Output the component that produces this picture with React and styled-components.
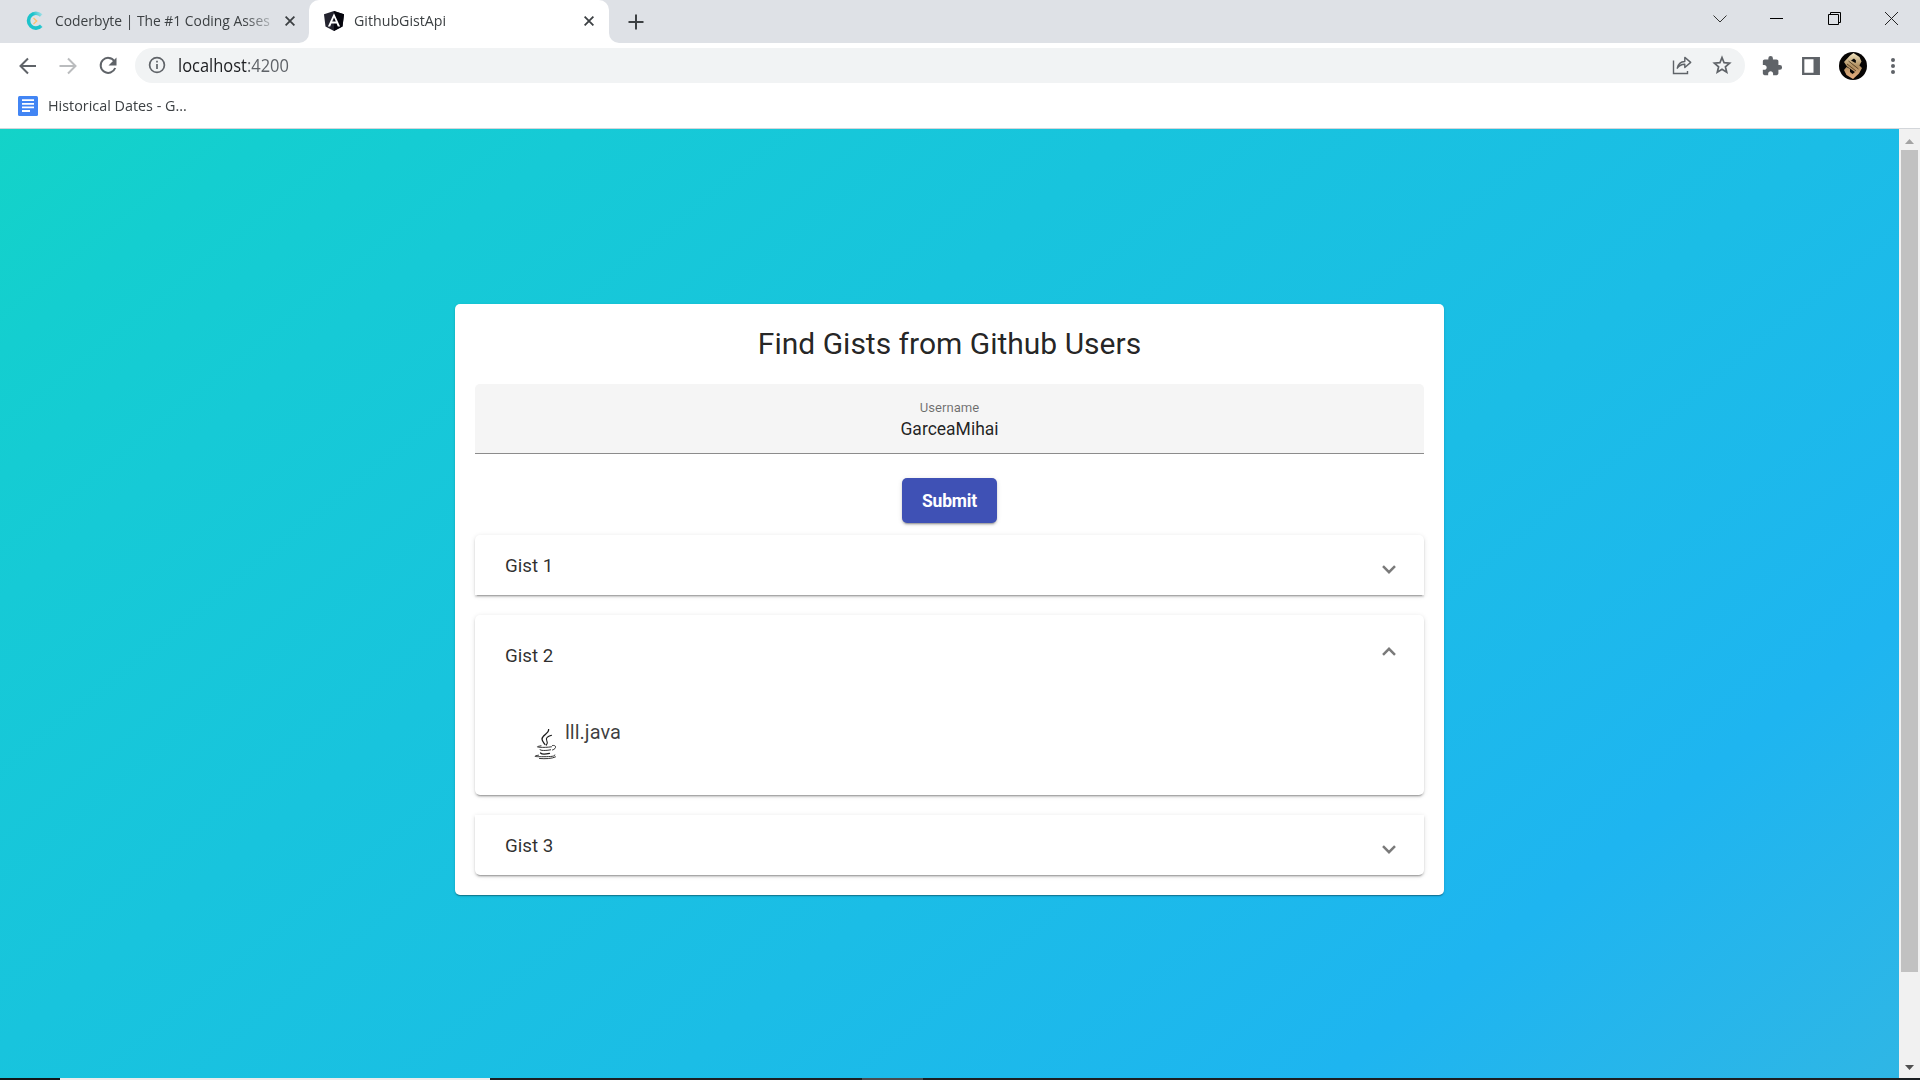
import React from "react";
import styled, { createGlobalStyle } from "styled-components";

const Global = createGlobalStyle`
  * { box-sizing: border-box; }
  html, body { margin: 0; height: 100%; overflow: hidden; }
  body { font-family: Roboto, "Liberation Sans", sans-serif; color: rgba(0,0,0,0.87); }
`;

const Window = styled.div`
  width: 1920px;
  height: 1080px;
  display: flex;
  flex-direction: column;
  background: #fff;
  overflow: hidden;
`;

const chromeFont = `"Open Sans", "Noto Sans", sans-serif`;

const TabStrip = styled.div`
  height: 43px;
  flex: none;
  display: flex;
  background: #fff;
`;
const TabSlot = styled.div`
  display: flex;
  background: ${(p) => (p.$active ? "#dee1e6" : "#fff")};
`;
const Tab = styled.div`
  display: flex;
  align-items: center;
  height: 43px;
  width: ${(p) => p.$width}px;
  padding: ${(p) => p.$padding};
  background: ${(p) => (p.$active ? "#fff" : "#dee1e6")};
  border-radius: ${(p) => (p.$active ? "10px 10px 0 0" : "0 0 10px 0")};
`;
const TabTitle = styled.span`
  font: 14.5px ${chromeFont};
  color: #3c4043;
  white-space: nowrap;
  margin-left: 10px;
  flex: 1;
  height: 22px;
  line-height: 21px;
  mask-image: ${(p) => (p.$faded ? "linear-gradient(to right, #000 82%, transparent 98%)" : "none")};
`;
const Condensed = styled.span`
  display: inline-block;
  transform-origin: 0 50%;
  transform: scaleX(${(p) => p.$scale});
`;
const StripEnd = styled.div`
  flex: 1;
  display: flex;
  justify-content: space-between;
  padding-left: 19px;
  background: #dee1e6;
  border-bottom-left-radius: 10px;
`;
const WindowButtons = styled.div`
  display: flex;
  height: 37px;
  align-items: center;
`;
const WinButton = styled.div`
  width: 57px;
  display: flex;
  justify-content: center;
`;

const Toolbar = styled.div`
  height: 45px;
  flex: none;
  display: flex;
  align-items: center;
  padding: 0 24px 0 16px;
`;
const Nav = styled.div`
  display: flex;
  gap: 16px;
  margin-right: 15px;
  svg { display: block; }
`;
const Address = styled.div`
  flex: 1;
  height: 35px;
  border-radius: 18px;
  background: #f1f3f4;
  display: flex;
  align-items: center;
  padding: 0 13px 0 13px;
  margin-top: -1px;
`;
const Url = styled.div`
  flex: 1;
  margin-left: 12px;
  font: 17.5px/24px ${chromeFont};
  color: #5f6368;
  b { font-weight: 400; color: #202124; }
`;
const Actions = styled.div`
  display: flex;
  align-items: center;
  gap: ${(p) => p.$gap}px;
  svg { display: block; }
`;
const ToolIcons = styled.div`
  display: flex;
  align-items: center;
  gap: 19px;
  margin-left: 16px;
  svg { display: block; }
  svg:last-child { margin-left: 4px; }
`;
const Bookmarks = styled.div`
  height: 41px;
  flex: none;
  display: flex;
  align-items: center;
  padding: 0 0 5px 18px;
  border-bottom: 1px solid #d3d6da;
`;
const BookmarkTitle = styled.span`
  margin-left: 10px;
  font: 14.5px/20px ${chromeFont};
  color: #3c4043;
  white-space: nowrap;
`;

const Viewport = styled.div`
  flex: 1;
  display: flex;
  min-height: 0;
`;
const Page = styled.main`
  flex: 1;
  display: flex;
  justify-content: center;
  align-items: flex-start;
  padding-top: 175px;
  background: linear-gradient(
    141deg,
    #13d3c8 0%,
    #14ced0 9%,
    #16cad6 19%,
    #18c4dd 37%,
    #1bbde6 60%,
    #1eb5f0 81.4%,
    #2fb6e5 100%
  );
`;
const Scrollbar = styled.div`
  width: 21px;
  display: flex;
  flex-direction: column;
  align-items: center;
  background: #f1f1f1;
`;
const Arrow = styled.div`
  height: 21px;
  display: flex;
  align-items: center;
  padding-top: ${(p) => p.$drop || 0}px;
`;
const Thumb = styled.div`
  width: 17px;
  height: 822px;
  background: #c1c1c1;
`;
const TrackEnd = styled.div`
  flex: 1;
`;
const Taskbar = styled.div`
  height: 2px;
  flex: none;
  display: flex;
  background: #1b1f22;
`;
const TaskSegment = styled.div`
  width: ${(p) => p.$width}px;
  background: ${(p) => p.$color};
`;

const elevation = `0 3px 1px -2px rgba(0,0,0,.2), 0 2px 2px 0 rgba(0,0,0,.14), 0 1px 5px 0 rgba(0,0,0,.12)`;

const Card = styled.section`
  width: 989px;
  height: 591px;
  padding: 20px;
  border-radius: 5px;
  background: #fff;
  box-shadow: 0 2px 1px -1px rgba(0,0,0,.2), 0 1px 1px 0 rgba(0,0,0,.14), 0 1px 3px 0 rgba(0,0,0,.12);
  display: flex;
  flex-direction: column;
  align-items: center;
`;
const Title = styled.h1`
  margin: 0 0 20px;
  font-size: 30px;
  line-height: 39px;
  height: 40px;
  font-weight: 400;
`;
const Field = styled.div`
  width: 100%;
  height: 70px;
  flex: none;
  display: flex;
  flex-direction: column;
  align-items: center;
  padding-top: 15px;
  background: #f5f5f5;
  border-radius: 5px 5px 0 0;
  border-bottom: 1px solid #8c8c8c;
`;
const Label = styled.label`
  font-size: 13.1px;
  line-height: 18px;
  color: rgba(0,0,0,.56);
`;
const Value = styled.span`
  font-size: 17.5px;
  line-height: 24px;
`;
const Submit = styled.button`
  margin: 24px 0 12px;
  width: 95px;
  height: 45px;
  flex: none;
  padding: 1px 0 0;
  border: 0;
  border-radius: 5px;
  background: #3f51b5;
  color: #fff;
  font: 700 17.5px/44px Roboto, sans-serif;
  letter-spacing: -0.2px;
  box-shadow: ${elevation};
`;
const Panels = styled.div`
  width: 100%;
  display: flex;
  flex-direction: column;
  gap: 20px;
`;
const Panel = styled.article`
  height: ${(p) => p.$height}px;
  border-radius: ${(p) => p.$radius};
  background: #fff;
  box-shadow: ${elevation};
`;
const PanelHeader = styled.header`
  height: ${(p) => (p.$open ? 80 : 60)}px;
  display: flex;
  justify-content: space-between;
  align-items: center;
  padding: 0 28px 0 30px;
`;
const PanelTitle = styled.span`
  padding-top: 1px;
  font-size: 18.75px;
  color: rgba(0,0,0,.82);
`;
const ChevronBox = styled.span`
  display: flex;
  padding-top: ${(p) => (p.$open ? 0 : 8)}px;
  padding-bottom: ${(p) => (p.$open ? 8 : 0)}px;
`;
const FileRow = styled.div`
  display: flex;
  padding: 22px 0 0 59px;
  svg { margin-top: 12px; }
`;
const FileName = styled.span`
  margin-left: 7px;
  font-size: 20px;
  line-height: 30px;
  color: rgba(0,0,0,.76);
`;

const Cross = () => (
  <svg width="10" height="10" viewBox="0 0 10 10" stroke="#3c4043" strokeWidth="1.8">
    <path d="M0.6 0.6l8.8 8.8M9.4 0.6L0.6 9.4" />
  </svg>
);
const Coderbyte = () => (
  <svg width="20" height="20" viewBox="0 0 20 20" fill="none">
    <defs>
      <linearGradient id="ring" x1="1" y1="0" x2="0.5" y2="0.3">
        <stop offset="0" stopColor="#9fdfe6" />
        <stop offset="1" stopColor="#1cc3cb" />
      </linearGradient>
    </defs>
    <path d="M16.200 4.500A7.400 7.400 0 1 0 16.300 14.800" stroke="url(#ring)" strokeWidth="3.6" />
    <path d="M8.500 7l3.200 3-3.200 3" stroke="#fbc36b" strokeWidth="1.3" />
  </svg>
);
const Angular = () => (
  <svg width="20" height="20" viewBox="0 0 20 20">
    <path d="M10 0L20 3.3l-1.5 12.3L10 20l-8.5-4.4L0 3.3z" fill="#23232e" />
    <path d="M10 0L20 3.3l-1.5 12.3L10 20z" fill="#05050d" />
    <path d="M10 2.3L3.9 15.4h2.3l1.2-3h5.2l1.2 3h2.3zM10 6.6l1.8 4H8.2z" fill="#fff" />
  </svg>
);
const NavArrow = ({ color, forward }) => (
  <svg width="24" height="24" viewBox="0 0 24 24" fill="none" stroke={color} strokeWidth="2">
    <path d={forward ? "M3.500 12h16M12 4.500l7.500 7.500-7.500 7.500" : "M20 12H4.500M12 4.500L4.500 12l7.500 7.500"} />
  </svg>
);
const Reload = () => (
  <svg width="24" height="24" viewBox="0 0 24 24">
    <path d="M18.4 7.2A7.5 7.5 0 1 0 19.2 14" fill="none" stroke="#5f6368" strokeWidth="2" />
    <path d="M20.5 3.5v8h-8z" fill="#5f6368" />
  </svg>
);
const Info = () => (
  <svg width="18" height="18" viewBox="0 0 18 18" fill="none" stroke="#5f6368" strokeWidth="1.7">
    <circle cx="9" cy="9" r="7.4" />
    <path d="M9 8v5M9 4.8v1.8" />
  </svg>
);
const Share = () => (
  <svg width="20" height="20" viewBox="0 0 20 20" fill="none" stroke="#5f6368" strokeWidth="1.4">
    <path d="M1.500 5.500v13h14v-2.500" />
    <path d="M5.300 13.200c.8-4.300 3.500-6.500 7.500-6.700V2.400l5.900 5-5.900 5.100V9.200c-3.500-.1-5.500 1.200-7.500 4z" strokeLinejoin="round" />
  </svg>
);
const Star = () => (
  <svg width="20" height="20" viewBox="0 0 20 20" fill="none" stroke="#5f6368" strokeWidth="1.7">
    <path d="M10 2.6l2.1 5.1 5.5.5-4.2 3.6 1.3 5.4L10 14.3l-4.7 2.9 1.3-5.4-4.2-3.6 5.5-.5z" />
  </svg>
);
const Puzzle = () => (
  <svg width="22" height="22" viewBox="0 0 24 24" fill="#5f6368">
    <path d="M20.5 11H19V7c0-1.1-.9-2-2-2h-4V3.5a2.500 2.500 0 0 0-5 0V5H4c-1.100 0-1.990.9-1.990 2v3.800H3.500c1.490 0 2.700 1.210 2.700 2.700s-1.210 2.700-2.700 2.700H2V20c0 1.100.9 2 2 2h3.800v-1.500c0-1.490 1.210-2.700 2.700-2.700s2.700 1.210 2.700 2.700V22H17c1.100 0 2-.9 2-2v-4h1.500a2.500 2.500 0 0 0 0-5z" />
  </svg>
);
const SidePanel = () => (
  <svg width="18" height="18" viewBox="0 0 18 18">
    <path d="M1.200 1.200h15.600v15.600H1.200z" fill="#fff" stroke="#5f6368" strokeWidth="2.300" />
    <path d="M11.500 1H17v16h-5.500z" fill="#5f6368" />
  </svg>
);
const Avatar = () => (
  <svg width="28" height="28" viewBox="0 0 28 28">
    <defs>
      <linearGradient id="gold" x1="0" y1="0" x2="0" y2="1">
        <stop offset="0" stopColor="#f0e4c0" />
        <stop offset=".5" stopColor="#b08f60" />
        <stop offset="1" stopColor="#e8ae80" />
      </linearGradient>
    </defs>
    <circle cx="14" cy="14" r="14" fill="#070504" />
    <path d="M14.500 1L11 3.500 5 10l3 4.500 8 5.500-2.500 2-2.500-2v-3L7.500 15 5 18l2.500 5L14 27l6-5.500 3-5.500-3-3-8-4.500 3-2 2 2-.5 3.500 3.500 2 2.500-4.500-2-4.500z" fill="url(#gold)" />
    <path d="M9.500 9l10 8M8 12l9 7" stroke="#4a3218" strokeWidth=".8" fill="none" />
  </svg>
);
const Menu = () => (
  <svg width="6" height="18" viewBox="0 0 6 18" fill="#5f6368">
    <circle cx="3" cy="2.900" r="2" /><circle cx="3" cy="9" r="2" /><circle cx="3" cy="15.100" r="2" />
  </svg>
);
const Docs = () => (
  <svg width="20" height="20" viewBox="0 0 20 20">
    <rect width="20" height="20" rx="1.500" fill="#4285f4" />
    <path d="M4 4.200h12M4 7.800h12M4 11.400h12M4 15h8" stroke="#fff" strokeWidth="1.800" />
  </svg>
);
const Chevron = ({ open }) => (
  <svg width="14" height="9" viewBox="0 0 14 9" fill="none" stroke="#7a7a7a" strokeWidth="2.500">
    <path d={open ? "M1 7.800L7 1.800l6 6" : "M1 1.200L7 7.200l6-6"} />
  </svg>
);
const Java = () => (
  <svg width="24" height="31" viewBox="0 0 24 31" fill="none" stroke="#1c1c1c" strokeWidth="0.900" strokeLinecap="round">
    <path d="M14.600.5c.8 4.200-6.600 5.500-6.600 9.500 0 2 1.500 3.200 3 5.500" strokeWidth="1.300" />
    <path d="M17.500 6.300c-4 1.200-6 2.700-4.800 5 .9 1.600.8 3-.4 4.800" strokeWidth="1.100" />
    <path d="M7 16.800c-3.500.6-5 1.200-2 1.400 4.500.3 8.500.2 12.500-.4" />
    <path d="M18.500 16.500c4.500-.8 4 3.500 0 4.500" />
    <path d="M5.800 20.600c0 1.200 6 1.200 10.800.2" />
    <path d="M6.500 24c1.200 1.300 5 1.300 9 .3" strokeWidth="1.200" />
    <path d="M4.500 26.200c-6 1-4 1.600 3 1.500 7 0 14 0 13.500-1.700" />
    <path d="M5.500 29.500c6 .5 12.500.2 16-1.600" />
  </svg>
);

const gists = [
  { title: "Gist 1", height: 60, radius: "5px 5px 0 0" },
  { title: "Gist 2", height: 180, radius: "5px", file: "lll.java" },
  { title: "Gist 3", height: 60, radius: "0 0 5px 5px" },
];

export default function App() {
  return (
    <Window>
      <Global />
      <TabStrip>
        <TabSlot>
          <Tab $width={309} $padding="0 14px 2px 25px">
            <Coderbyte />
            <TabTitle $faded><Condensed $scale={0.955}>Coderbyte | The #1 Coding Asses</Condensed></TabTitle>
            <Cross />
          </Tab>
        </TabSlot>
        <TabSlot $active>
          <Tab $active $width={300} $padding="0 15px 1px 15px">
            <Angular />
            <TabTitle><Condensed $scale={0.98}>GithubGistApi</Condensed></TabTitle>
            <Cross />
          </Tab>
        </TabSlot>
        <StripEnd>
          <Actions $gap={0}>
            <svg width="16" height="16" viewBox="0 0 16 16" stroke="#3c4043" strokeWidth="2"><path d="M8 .5v15M.5 8h15" /></svg>
          </Actions>
          <WindowButtons>
            <WinButton><svg width="15" height="8" viewBox="1 0 15 8" fill="none" stroke="#333"><path d="M1.500.5L8 7 14.500.5" /></svg></WinButton>
            <WinButton><svg width="15" height="13" viewBox="0 0 15 13" stroke="#000"><path d="M0 6.500h13" /></svg></WinButton>
            <WinButton><svg width="13" height="13" viewBox="0 0 13 13" fill="none" stroke="#000"><path d="M.5 2.500h10v10H.5zM2.500 2.500v-2h10v10h-2" /></svg></WinButton>
            <WinButton><svg width="13" height="13" viewBox="0 0 13 13" stroke="#222"><path d="M0 0l13 13M13 0L0 13" /></svg></WinButton>
          </WindowButtons>
        </StripEnd>
      </TabStrip>
      <Toolbar>
        <Nav><NavArrow color="#5f6368" /><NavArrow color="#babcbe" forward /><Reload /></Nav>
        <Address>
          <Info />
          <Url><Condensed $scale={0.94}><b>localhost</b>:4200</Condensed></Url>
          <Actions $gap={20}><Share /><Star /></Actions>
        </Address>
        <ToolIcons><Puzzle /><SidePanel /><Avatar /><Menu /></ToolIcons>
      </Toolbar>
      <Bookmarks><Docs /><BookmarkTitle><Condensed $scale={0.99}>Historical Dates - G...</Condensed></BookmarkTitle></Bookmarks>
      <Viewport>
        <Page>
          <Card>
            <Title>Find Gists from Github Users</Title>
            <Field><Label>Username</Label><Value>GarceaMihai</Value></Field>
            <Submit>Submit</Submit>
            <Panels>
              {gists.map((g) => (
                <Panel key={g.title} $height={g.height} $radius={g.radius}>
                  <PanelHeader $open={!!g.file}>
                    <PanelTitle>{g.title}</PanelTitle>
                    <ChevronBox $open={!!g.file}><Chevron open={!!g.file} /></ChevronBox>
                  </PanelHeader>
                  {g.file && <FileRow><Java /><FileName>{g.file}</FileName></FileRow>}
                </Panel>
              ))}
            </Panels>
          </Card>
        </Page>
        <Scrollbar>
          <Arrow $drop={3}><svg width="9" height="5" viewBox="0 0 9 5"><path d="M0 5L4.500 0 9 5z" fill="#a3a3a3" /></svg></Arrow>
          <Thumb />
          <TrackEnd />
          <Arrow><svg width="9" height="5" viewBox="0 0 9 5"><path d="M0 0l4.500 5L9 0z" fill="#505050" /></svg></Arrow>
        </Scrollbar>
      </Viewport>
      <Taskbar>
        <TaskSegment $width={60} $color="#111618" />
        <TaskSegment $width={430} $color="#ececec" />
        <TaskSegment $width={372} $color="#1b1f22" />
        <TaskSegment $width={61} $color="#484c50" />
      </Taskbar>
    </Window>
  );
}
